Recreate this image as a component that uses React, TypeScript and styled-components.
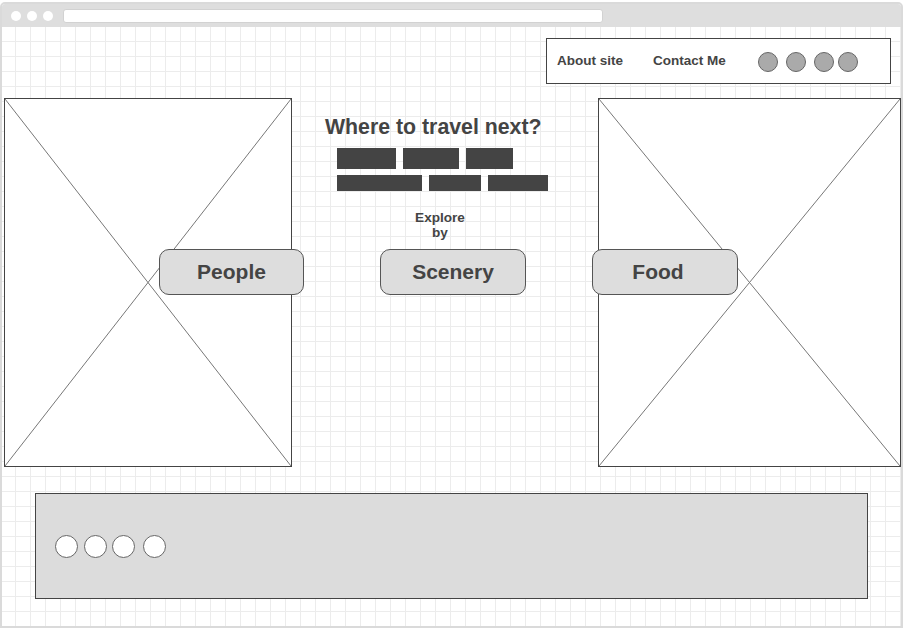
import styled, { createGlobalStyle } from "styled-components";

const GlobalStyle = createGlobalStyle`
  html, body {
    margin: 0;
    padding: 0;
    background: #ffffff;
  }
  body {
    font-family: "Liberation Sans", Arial, sans-serif;
    color: #444444;
  }
`;

const navLinks = [
  { label: "About site", width: 96 },
  { label: "Contact Me", width: 105 },
];
const navDots = [0, 8, 8, 4];
const footerDots = [0, 6, 5, 8];

const XImage = () => (
  <svg width="100%" height="100%" preserveAspectRatio="none" viewBox="0 0 100 100">
    <line x1="0" y1="0" x2="100" y2="100" stroke="#777" strokeWidth="1" vectorEffect="non-scaling-stroke" />
    <line x1="100" y1="0" x2="0" y2="100" stroke="#777" strokeWidth="1" vectorEffect="non-scaling-stroke" />
  </svg>
);

export default function App() {
  return (
    <>
      <GlobalStyle />
      <BrowserFrame>
        <TitleBar>
          <WindowDot />
          <WindowDot />
          <WindowDot />
          <AddressBar />
        </TitleBar>
        <Canvas>
          <NavBox>
            {navLinks.map((l) => (
              <NavLink key={l.label} $w={l.width}>
                {l.label}
              </NavLink>
            ))}
            {navDots.map((m, i) => (
              <NavCircle key={i} $ml={m} />
            ))}
          </NavBox>

          <Hero>
            <ImageBox $col={1}>
              <XImage />
            </ImageBox>
            <CenterColumn>
              <Title>Where to travel next?</Title>
              <BarRow>
                <Bar $w={59} $h={21} />
                <Bar $w={56} $h={21} />
                <Bar $w={47} $h={21} />
              </BarRow>
              <BarRow $mt={6}>
                <Bar $w={85} $h={16} />
                <Bar $w={52} $h={16} />
                <Bar $w={60} $h={16} />
              </BarRow>
              <ExploreLabel>Explore by</ExploreLabel>
            </CenterColumn>
            <ImageBox $col={3}>
              <XImage />
            </ImageBox>
            <ButtonRow>
              <CategoryButton $w={145}>People</CategoryButton>
              <CategoryButton $w={146} $ml={76}>
                Scenery
              </CategoryButton>
              <CategoryButton $w={146} $ml={66} $shift={14}>
                Food
              </CategoryButton>
            </ButtonRow>
          </Hero>

          <Footer>
            {footerDots.map((m, i) => (
              <FooterCircle key={i} $ml={m} />
            ))}
          </Footer>
        </Canvas>
      </BrowserFrame>
    </>
  );
}

const BrowserFrame = styled.div`
  box-sizing: border-box;
  width: 903px;
  height: 626px;
  margin-top: 2px;
  border: 2px solid #dadada;
  border-radius: 5px 5px 0 0;
  display: flex;
  flex-direction: column;
  overflow: hidden;
`;

const TitleBar = styled.div`
  flex: none;
  height: 23px;
  background: #dedede;
  display: flex;
  align-items: center;
  gap: 6px;
  padding-left: 9px;
`;

const WindowDot = styled.div`
  width: 10px;
  height: 10px;
  border-radius: 50%;
  background: #ffffff;
`;

const AddressBar = styled.div`
  box-sizing: border-box;
  margin-left: 4px;
  width: 540px;
  height: 14px;
  background: #ffffff;
  border: 1px solid #d2d2d2;
  border-radius: 3px;
`;

const Canvas = styled.div`
  flex: 1;
  display: flex;
  flex-direction: column;
  padding-top: 11px;
  background-color: #ffffff;
  background-image: linear-gradient(to right, #ececec 1px, transparent 1px),
    linear-gradient(to bottom, #ececec 1px, transparent 1px);
  background-size: 15px 15px;
  background-position: 13px 14px;
`;

const NavBox = styled.div`
  box-sizing: border-box;
  align-self: flex-end;
  margin-right: 10px;
  width: 345px;
  height: 46px;
  border: 1px solid #444444;
  background: #ffffff;
  display: flex;
  align-items: center;
  padding-left: 10px;
`;

const NavLink = styled.span<{ $w: number }>`
  width: ${(p) => p.$w}px;
  margin-top: -2px;
  font-size: 13.5px;
  font-weight: bold;
  color: #444444;
  white-space: nowrap;
`;

const NavCircle = styled.div<{ $ml: number }>`
  box-sizing: border-box;
  width: 20px;
  height: 20px;
  margin-left: ${(p) => p.$ml}px;
  margin-top: 2px;
  border-radius: 50%;
  background: #aaaaaa;
  border: 1px solid #666666;
`;

const Hero = styled.div`
  margin-top: 14px;
  margin-left: 2px;
  display: grid;
  grid-template-columns: 288px 306px 303px;
  grid-template-rows: 369px;
`;

const ImageBox = styled.div<{ $col: number }>`
  grid-row: 1;
  grid-column: ${(p) => p.$col};
  box-sizing: border-box;
  border: 1px solid #444444;
  background: #ffffff;

  svg {
    display: block;
  }
`;

const CenterColumn = styled.div`
  grid-row: 1;
  grid-column: 2;
  display: flex;
  flex-direction: column;
  align-items: flex-start;
  padding-left: 33px;
`;

const Title = styled.h1`
  margin: 17px 0 0;
  font-size: 21.3px;
  line-height: 24px;
  font-weight: bold;
  color: #444444;
  white-space: nowrap;
`;

const BarRow = styled.div<{ $mt?: number }>`
  display: flex;
  gap: 7px;
  margin-top: ${(p) => p.$mt ?? 9}px;
  margin-left: 12px;
`;

const Bar = styled.div<{ $w: number; $h: number }>`
  width: ${(p) => p.$w}px;
  height: ${(p) => p.$h}px;
  background: #444444;
`;

const ExploreLabel = styled.div`
  width: 60px;
  margin-top: 19px;
  margin-left: 85px;
  font-size: 13.6px;
  line-height: 15px;
  font-weight: bold;
  text-align: center;
  color: #444444;
`;

const ButtonRow = styled.div`
  grid-row: 1;
  grid-column: 1 / -1;
  align-self: start;
  margin-top: 151px;
  display: flex;
  padding-left: 155px;
`;

const CategoryButton = styled.button<{ $w: number; $ml?: number; $shift?: number }>`
  box-sizing: border-box;
  width: ${(p) => p.$w}px;
  height: 46px;
  margin-left: ${(p) => p.$ml ?? 0}px;
  padding: 0 ${(p) => p.$shift ?? 0}px 0 0;
  border: 1px solid #555555;
  border-radius: 10px;
  background: #dddddd;
  font-family: inherit;
  font-size: 21px;
  font-weight: bold;
  color: #444444;
  display: flex;
  align-items: center;
  justify-content: center;
`;

const Footer = styled.div`
  box-sizing: border-box;
  margin-top: 26px;
  margin-left: 33px;
  width: 833px;
  height: 106px;
  border: 1px solid #444444;
  background: #dcdcdc;
  display: flex;
  align-items: center;
  padding-left: 19px;
`;

const FooterCircle = styled.div<{ $ml: number }>`
  box-sizing: border-box;
  width: 23px;
  height: 23px;
  margin-left: ${(p) => p.$ml}px;
  border-radius: 50%;
  background: #ffffff;
  border: 1px solid #666666;
`;
